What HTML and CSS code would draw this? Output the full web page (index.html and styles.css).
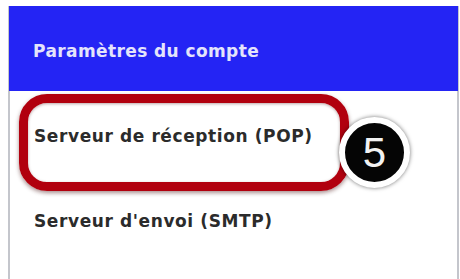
FILE: index.html
```html
<!DOCTYPE html>
<html lang="fr">
<head>
<meta charset="utf-8">
<link rel="stylesheet" href="styles.css">
</head>
<body>
<div class="card">
  <div class="header">Paramètres du compte</div>
  <ul class="menu">
    <li class="item">Serveur de réception (POP)</li>
    <li class="item">Serveur d'envoi (SMTP)</li>
  </ul>
  <div class="highlight"></div>
  <div class="badge">5</div>
</div>
</body>
</html>
```

FILE: styles.css
```css
html, body {
  margin: 0;
  padding: 0;
  background: #ffffff;
}
body {
  width: 460px;
  height: 279px;
  overflow: hidden;
  font-family: "DejaVu Sans", Verdana, sans-serif;
}
.card {
  position: relative;
  margin: 6px 0 0 8px;
  width: 447px;
  height: 273px;
  border-left: 2px solid #c4c6cc;
  border-right: 2px solid #c4c6cc;
  background: #ffffff;
}
.header {
  height: 85px;
  box-sizing: border-box;
  display: flex;
  align-items: center;
  padding: 5px 0 0 24px;
  background: #2424f4;
  color: #e4e4fb;
  font-weight: bold;
  font-size: 17px;
  letter-spacing: 0.4px;
  margin-left: -1px;
  margin-right: -1px;
}
.menu {
  list-style: none;
  margin: 0;
  padding: 0;
}
.item {
  height: 85px;
  box-sizing: border-box;
  display: flex;
  align-items: center;
  padding: 5px 0 0 24px;
  color: #2b2b2b;
  font-weight: bold;
  font-size: 17px;
  letter-spacing: 0.6px;
}
.highlight {
  position: absolute;
  left: 9px;
  top: 88px;
  width: 312px;
  height: 79px;
  border: 9px solid #b1000e;
  border-radius: 28px;
  box-shadow: 0 2px 4px rgba(60, 0, 0, 0.45), inset 0 1px 3px rgba(60, 0, 0, 0.35);
}
.badge {
  position: absolute;
  left: 329px;
  top: 111px;
  width: 59px;
  height: 59px;
  border-radius: 50%;
  background: #050505;
  border: 6px solid #ffffff;
  box-shadow: 0 0 4px rgba(0, 0, 0, 0.55);
  color: #f2f2f2;
  font-family: "Liberation Sans", Arial, sans-serif;
  font-size: 42px;
  line-height: 59px;
  text-align: center;
}
```
